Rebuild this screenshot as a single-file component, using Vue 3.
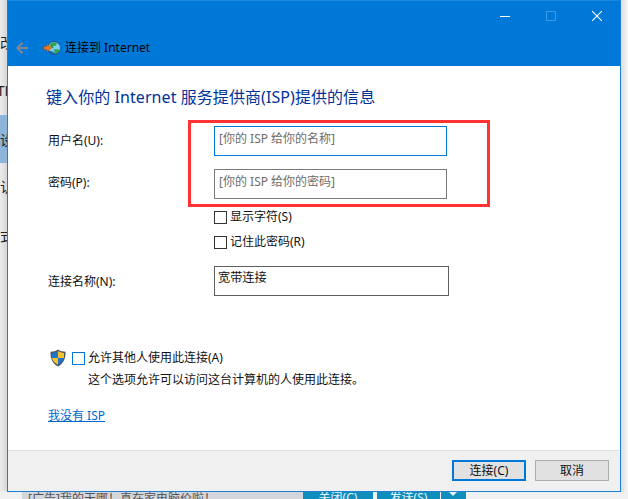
<script setup>
const leftGlyphs = [
  { text: '改', cls: 'g1' },
  { text: 'TP', cls: 'g2' },
  { text: '设', cls: 'g3' },
  { text: '认', cls: 'g4' },
  { text: '式', cls: 'g5' },
]
</script>

<template>
  <div class="desk">
    <div class="behind-left">
      <div class="sel"></div>
      <div v-for="g in leftGlyphs" :key="g.text" class="glyph" :class="g.cls"><span>{{ g.text }}</span></div>
    </div>
    <div class="behind-bottom">
      <div class="ad">[广告]我的天哪！真在家电脑价啦！</div>
      <div class="bbtn b1">关闭(C)</div>
      <div class="bbtn b2">发送(S)</div>
      <div class="bbtn b3"><i></i></div>
    </div>
    <div class="behind-right"></div>

    <div class="dialog">
      <header class="head">
        <div class="caption">
          <span class="ctl"><svg width="10" height="10" viewBox="0 0 10 10"><path d="M0 5.5H10" stroke="#fff" stroke-width="1"/></svg></span>
          <span class="ctl"><svg width="10" height="10" viewBox="0 0 10 10"><rect x=".5" y=".5" width="9" height="9" fill="none" stroke="#3f9ae6"/></svg></span>
          <span class="ctl"><svg width="10" height="10" viewBox="0 0 10 10"><path d="M0 0L10 10M10 0L0 10" stroke="#fff" stroke-width="1.100"/></svg></span>
        </div>
        <div class="nav">
          <svg class="back" width="12" height="12" viewBox="0 0 12 12"><path d="M6.500 .8L1.300 6L6.500 11.200M1.300 6H12" fill="none" stroke="#7f8790" stroke-width="2"/></svg>
          <svg class="globe" width="16" height="16" viewBox="0 0 16 16">
            <circle cx="10" cy="8" r="6.500" fill="#7fd0f0"/>
            <path d="M5.500 5c1.500-2.500 5-3.500 7.500-2l-1 2.600-2.500 .5-.3 2.400-2.200-1zM9.500 9.500l4-.3 2 .8c-.6 2-2 3.500-4 4l-1-2.500z" fill="#35a24a"/>
            <path d="M4 10.500c1.500 3 5 4.500 8 3.500l-1.500-1.500-3-1.500z" fill="#1d6fb5"/>
            <circle cx="10" cy="8" r="6.500" fill="none" stroke="#123f78" stroke-width=".8"/>
            <path d="M0 6.500H3V4L7.500 8L3 12V9.500H0z" fill="#f0761e" stroke="#a8470f" stroke-width=".5"/>
          </svg>
          <span class="title">连接到 Internet</span>
        </div>
      </header>

      <main class="main">
        <h1 class="heading">键入你的 Internet 服务提供商(ISP)提供的信息</h1>
        <div class="form">
          <label class="lbl">用户名(U):</label>
          <div class="field focus hint">[你的 ISP 给你的名称]</div>
          <label class="lbl r2">密码(P):</label>
          <div class="field hint r2">[你的 ISP 给你的密码]</div>
          <div class="check c1"><span class="box"></span>显示字符(S)</div>
          <div class="check c2"><span class="box"></span>记住此密码(R)</div>
          <label class="lbl r3">连接名称(N):</label>
          <div class="field name r3">宽带连接</div>
        </div>

        <div class="allow">
          <svg class="shield" width="16" height="18" viewBox="0 0 16 18">
            <path d="M8 .5C10 2 12.500 2.600 15.500 2.800C15.700 9 14 14.500 8 17.500C2 14.500 .3 9 .5 2.800C3.500 2.600 6 2 8 .5z" fill="#4e535a"/>
            <path d="M8 2V9H2C1.900 7 1.900 5.500 2 4C4 3.800 6.200 3.200 8 2z" fill="#2272c8"/>
            <path d="M8 2C9.800 3.200 12 3.800 14 4C14.100 5.500 14.100 7 14 9H8z" fill="#f7c02e"/>
            <path d="M2 9H8V15.700C4.500 14 2.500 12 2 9z" fill="#f7c02e"/>
            <path d="M8 9H14C13.500 12 11.500 14 8 15.700z" fill="#2272c8"/>
          </svg>
          <span class="box active"></span>
          <div class="allow-text">
            <div>允许其他人使用此连接(A)</div>
            <div class="line2">这个选项允许可以访问这台计算机的人使用此连接。</div>
          </div>
        </div>

        <a class="link">我没有 ISP</a>
      </main>

      <footer class="foot">
        <button class="btn primary">连接(C)</button>
        <button class="btn">取消</button>
      </footer>
    </div>

    <div class="redmark"></div>
  </div>
</template>

<style scoped>
.desk {
  position: relative;
  width: 628px;
  height: 499px;
  overflow: hidden;
  background: #f4f4f4;
  font-family: "Noto Sans", "Noto Sans CJK SC", sans-serif;
  font-size: 12px;
  color: #111;
}
.behind-left {
  position: absolute;
  left: 0;
  top: 0;
  width: 7px;
  height: 499px;
  overflow: hidden;
  background: linear-gradient(90deg, #ececec, #d6d6d6);
}
.sel {
  position: absolute;
  left: 0;
  top: 115px;
  width: 7px;
  height: 48px;
  background: #8db4da;
}
.glyph {
  position: absolute;
  right: 0;
  width: 20px;
  display: flex;
  justify-content: flex-end;
  font-size: 14px;
  line-height: 16px;
  color: #222;
}
.glyph span { margin-right: -7px; white-space: nowrap; }
.g1 { top: 35px; }
.g2 { top: 83px; }
.g3 { top: 132px; }
.g4 { top: 179px; }
.g5 { top: 228px; }
.g2 span { margin-right: -6px; }

.behind-bottom {
  position: absolute;
  left: 0;
  right: 0;
  bottom: 0;
  height: 8px;
  overflow: hidden;
  background: #f1f1f1;
}
.ad {
  position: absolute;
  left: 22px;
  top: 0;
  width: 281px;
  height: 8px;
  padding-left: 6px;
  box-sizing: border-box;
  background: #d5d5dc;
  color: #555;
  line-height: 16px;
  font-size: 12px;
  overflow: hidden;
}
.bbtn {
  position: absolute;
  top: 0;
  height: 8px;
  background: #0f8dbd;
  color: #e8f4fa;
  text-align: center;
  font-size: 12px;
  line-height: 14px;
  overflow: hidden;
}
.b1 { left: 303px; width: 70px; }
.b2 { left: 377px; width: 63px; }
.b3 { left: 441px; width: 25px; }
.b3 i {
  position: absolute;
  left: 7px;
  top: 0;
  border: 5px solid transparent;
  border-top: 5px solid #e8f4fa;
}
.behind-right {
  position: absolute;
  right: 0;
  top: 0;
  width: 7px;
  height: 492px;
  background: linear-gradient(90deg, #dcdcdc, #f8f8f8);
}

.dialog {
  position: absolute;
  left: 7px;
  top: 0;
  width: 614px;
  height: 492px;
  box-sizing: border-box;
  display: flex;
  flex-direction: column;
  border: 1px solid #1f7fd0;
  border-top: 0;
  background: #fff;
}
.head {
  height: 66px;
  background: #0078d7;
  border-top: 1px solid #1a86dc;
  box-sizing: border-box;
}
.caption {
  height: 29px;
  display: flex;
  justify-content: flex-end;
}
.ctl {
  width: 46px;
  height: 29px;
  display: flex;
  align-items: center;
  justify-content: center;
}
.nav {
  height: 36px;
  display: flex;
  align-items: center;
  padding-left: 8px;
}
.back { margin-right: 16px; }
.globe { margin-right: 5px; }
.title { color: #000; font-size: 12px; line-height: 16px; }

.main {
  flex: 1;
  padding: 20px 0 0 38px;
  min-height: 0;
}
.heading {
  margin: 0;
  font-size: 16px;
  font-weight: 400;
  line-height: 22px;
  letter-spacing: .07px;
  color: #003399;
  white-space: nowrap;
}
.form {
  margin: 18px 0 0 2px;
  display: grid;
  grid-template-columns: 166px 235px;
  align-items: center;
}
.lbl { grid-column: 1; line-height: 16px; }
.field {
  grid-column: 2;
  width: 233px;
  height: 30px;
  box-sizing: border-box;
  border: 1px solid #7a7a7a;
  padding: 3px 3px 0;
  line-height: 18px;
}
.hint { color: #6d6d6d; padding-left: 4px; }
.focus { border-color: #0078d7; }
.field.r2 { margin-top: 13px; }
.lbl.r2 { margin-top: 11px; }
.field.name {
  width: 235px;
  border-color: #5f5f5f;
  color: #111;
  margin-top: 17px;
  padding-top: 2px;
  font-size: 12.2px;
}
.lbl.r3 { margin-top: 19px; }
.check {
  grid-column: 2;
  display: flex;
  align-items: center;
  height: 14px;
  line-height: 14px;
  white-space: nowrap;
}
.c1 { margin-top: 11px; }
.c2 { margin-top: 11px; }
.box {
  width: 13px;
  height: 13px;
  border: 1px solid #333;
  box-sizing: border-box;
  margin-right: 3px;
  flex: none;
}
.allow {
  display: flex;
  align-items: flex-start;
  margin: 53px 0 0 4px;
}
.shield { margin-right: 6px; flex: none; }
.box.active {
  border: 1px solid #0078d7;
  margin-top: 3px;
}
.allow-text { line-height: 16px; padding-top: 1px; white-space: nowrap; }
.line2 { margin-top: 6px; }
.link {
  display: inline-block;
  margin: 20px 0 0 2px;
  color: #0066cc;
  text-decoration: underline;
  line-height: 16px;
}

.foot {
  height: 41px;
  box-sizing: border-box;
  background: #f0f0f0;
  border-top: 1px solid #dfdfdf;
  display: flex;
  justify-content: flex-end;
  align-items: flex-start;
  gap: 9px;
  padding: 9px 11px 0 0;
}
.btn {
  width: 74px;
  height: 21px;
  box-sizing: border-box;
  border: 1px solid #adadad;
  background: #e1e1e1;
  color: #111;
  font: inherit;
  line-height: 17px;
  padding: 0;
}
.primary { border: 2px solid #0078d7; }

.redmark {
  position: absolute;
  left: 188px;
  top: 120px;
  width: 302px;
  height: 87px;
  box-sizing: border-box;
  border: 3px solid #ff3333;
  pointer-events: none;
}
</style>
